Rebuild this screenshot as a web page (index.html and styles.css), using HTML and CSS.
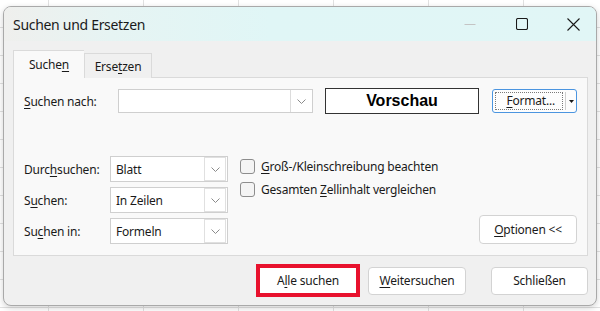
FILE: index.html
```html
<!DOCTYPE html>
<html lang="de">
<head>
    <meta charset="UTF-8">
    <meta name="viewport" content="width=device-width, initial-scale=1.0">
    <title>Suchen und Ersetzen</title>
    <link rel="stylesheet" href="styles.css">
</head>
<body>
    <div class="window">
        <div class="titlebar">
            <span class="title">Suchen und Ersetzen</span>
            <div class="controls">
                <span class="ctl ctl-min"><svg width="12" height="12" viewBox="0 0 12 12"><path d="M0.5 6.5h11" stroke="#c4c4c4" stroke-width="1"/></svg></span>
                <span class="ctl ctl-max"><svg width="12" height="12" viewBox="0 0 12 12"><rect x="0.5" y="0.5" width="11" height="11" rx="1.5" fill="none" stroke="#1a1a1a" stroke-width="1.1"/></svg></span>
                <span class="ctl ctl-close"><svg width="13" height="13" viewBox="0 0 13 13"><path d="M0.5 0.5l12 12M12.5 0.5l-12 12" stroke="#1a1a1a" stroke-width="1.1"/></svg></span>
            </div>
        </div>

        <div class="content">
            <div class="tabs">
                <div class="tab active">Suche<u>n</u></div>
                <div class="tab">Erse<u>t</u>zen</div>
            </div>

            <div class="panel">
                <div class="find-row">
                    <label class="find-label"><u>S</u>uchen nach:</label>
                    <div class="combo combo-find">
                        <span class="combo-text"></span>
                        <span class="combo-btn"><svg width="9" height="5" viewBox="0 0 9 5"><path d="M0.5 0.5l4 4 4-4" fill="none" stroke="#8a8a8a"/></svg></span>
                    </div>
                    <div class="preview">Vorschau</div>
                    <div class="format-btn">
                        <span class="format-main"><span class="focus-rect"><u>F</u>ormat...</span></span>
                        <span class="format-arrow"><svg width="5" height="3" viewBox="0 0 5 3"><path d="M0 0h5L2.5 3z" fill="#1a1a1a"/></svg></span>
                    </div>
                </div>

                <div class="options">
                    <div class="fields">
                        <label>Durc<u>h</u>suchen:</label>
                        <div class="combo"><span class="combo-text">Blatt</span><span class="combo-btn"><svg width="9" height="5" viewBox="0 0 9 5"><path d="M0.5 0.5l4 4 4-4" fill="none" stroke="#8a8a8a"/></svg></span></div>
                        <label>S<u>u</u>chen:</label>
                        <div class="combo"><span class="combo-text">In Zeilen</span><span class="combo-btn"><svg width="9" height="5" viewBox="0 0 9 5"><path d="M0.5 0.5l4 4 4-4" fill="none" stroke="#8a8a8a"/></svg></span></div>
                        <label>Su<u>c</u>hen in:</label>
                        <div class="combo"><span class="combo-text">Formeln</span><span class="combo-btn"><svg width="9" height="5" viewBox="0 0 9 5"><path d="M0.5 0.5l4 4 4-4" fill="none" stroke="#8a8a8a"/></svg></span></div>
                    </div>
                    <div class="checks">
                        <div class="check"><span class="box"></span><span><u>G</u>roß-/Kleinschreibung beachten</span></div>
                        <div class="check"><span class="box"></span><span>Gesamten <u>Z</u>ellinhalt vergleichen</span></div>
                    </div>
                    <button class="btn btn-options"><u>O</u>ptionen &lt;&lt;</button>
                </div>
            </div>

            <div class="actions">
                <div class="highlight"><button class="btn btn-all">A<u>l</u>le suchen</button></div>
                <button class="btn btn-next"><u>W</u>eitersuchen</button>
                <button class="btn btn-close">Schließen</button>
            </div>
        </div>
    </div>
</body>
</html>
```

FILE: styles.css
```css
body {
    margin: 0;
    padding: 0;
    width: 600px;
    height: 311px;
    overflow: hidden;
    font-family: "Noto Sans", "Open Sans", sans-serif;
    font-size: 12px;
    letter-spacing: -0.2px;
    color: #1a1a1a;
    background-color: #fff;
    background-image:
        repeating-linear-gradient(90deg, transparent 0 48px, #e1e1e1 48px 49px, transparent 49px 95px),
        repeating-linear-gradient(180deg, transparent 0 27px, #e1e1e1 27px 28px, transparent 28px 20px);
}
.window {
    box-sizing: border-box;
    width: 594px;
    height: 300px;
    margin: 6px 0 0 3px;
    border: 1px solid #a9a9a9;
    border-radius: 8px;
    background-color: #f0f0f0;
    box-shadow: 0 2px 6px rgba(0, 0, 0, 0.18);
    overflow: hidden;
}
.titlebar {
    height: 34px;
    display: flex;
    align-items: center;
    justify-content: space-between;
    padding-left: 9px;
    background: linear-gradient(90deg, #efefed 0%, #e6f4f3 18%, #e0f6f6 45%, #e1f6f6 100%);
}
.title {
    font-size: 14px;
    letter-spacing: -0.3px;
}
.controls {
    display: flex;
    align-items: center;
    height: 100%;
}
.ctl {
    width: 56px;
    display: flex;
    justify-content: center;
    align-items: center;
}
.ctl-min { width: 48px; }
.ctl-close { width: 46px; }

.content {
    padding: 9px 8px 0 9px;
}
.tabs {
    display: flex;
    align-items: flex-end;
    height: 27px;
}
.tab {
    box-sizing: border-box;
    width: 68px;
    height: 25px;
    padding-top: 4px;
    text-align: center;
    border: 1px solid #dadada;
    border-bottom: none;
    background-color: #f0f0f0;
    position: relative;
    top: 1px;
}
.tab.active {
    height: 28px;
    width: 71px;
    padding-top: 5px;
    background-color: #f9f9f9;
    border-right: none;
    z-index: 1;
}
.panel {
    box-sizing: border-box;
    height: 179px;
    border: 1px solid #dadada;
    background-color: #f9f9f9;
    padding: 10px 10px 0 10px;
}
u {
    text-underline-offset: 2px;
    text-decoration-thickness: 1px;
}

.find-row {
    display: flex;
    align-items: center;
    height: 26px;
}
.find-label {
    width: 94px;
}
.combo {
    box-sizing: border-box;
    height: 26px;
    display: flex;
    align-items: center;
    justify-content: space-between;
    border: 1px solid #cfcfcf;
    background-color: #fff;
}
.combo-find {
    width: 195px;
    height: 24px;
}
.combo-text {
    padding-left: 5px;
}
.combo-btn {
    box-sizing: border-box;
    width: 22px;
    height: 100%;
    display: flex;
    align-items: center;
    justify-content: center;
    border-left: 1px solid #dcdcdc;
    background-color: #fff;
}
.preview {
    box-sizing: border-box;
    width: 154px;
    height: 26px;
    margin-left: 12px;
    border: 1px solid #333;
    background-color: #fff;
    font-family: "Liberation Sans", Arial, sans-serif;
    font-weight: bold;
    font-size: 16px;
    letter-spacing: 0;
    text-align: center;
    line-height: 24px;
    color: #000;
}
.format-btn {
    box-sizing: border-box;
    width: 85px;
    height: 24px;
    margin-left: 13px;
    display: flex;
    border: 1px solid #4b95e0;
    border-radius: 3px;
    background-color: #fdfdfd;
    padding: 2px 0 2px 2px;
}
.format-main {
    flex: 1;
    display: flex;
    border-right: 1px solid #cfcfcf;
    padding-right: 2px;
}
.focus-rect {
    flex: 1;
    border: 1px dotted #7a7a7a;
    text-align: right;
    padding-right: 7px;
    line-height: 16px;
}
.format-arrow {
    width: 10px;
    display: flex;
    align-items: center;
    justify-content: center;
}

.options {
    display: flex;
    margin-top: 42px;
}
.fields {
    display: grid;
    grid-template-columns: 86px 118px;
    grid-auto-rows: 26px;
    row-gap: 5px;
    align-items: center;
}
.fields .combo-btn {
    height: 24px;
    margin-right: 1px;
    border: 1px solid #e0e0e0;
}
.checks {
    margin-left: 12px;
    padding-top: 3px;
}
.check {
    display: flex;
    align-items: center;
    height: 15px;
    margin-bottom: 8px;
}
.box {
    box-sizing: border-box;
    width: 15px;
    height: 15px;
    border: 1px solid #8d8d8d;
    border-radius: 3px;
    background-color: #f4f4f4;
    margin-right: 6px;
}
.btn {
    box-sizing: border-box;
    font-family: inherit;
    font-size: 12px;
    letter-spacing: -0.2px;
    color: #1a1a1a;
    background-color: #fff;
    border: 1px solid #d3d3d3;
    border-radius: 4px;
    padding: 0;
}
.btn-options {
    width: 98px;
    height: 29px;
    margin-left: auto;
    margin-top: 59px;
}

.actions {
    display: flex;
    justify-content: flex-end;
    align-items: center;
    margin-top: 8px;
}
.highlight {
    box-sizing: border-box;
    width: 104px;
    height: 33px;
    border: 4px solid #e8112d;
    background-color: #fff;
}
.btn-all {
    width: 100%;
    height: 100%;
    border: none;
    border-radius: 0;
}
.btn-next {
    width: 98px;
    height: 28px;
    margin-left: 8px;
}
.btn-close {
    width: 97px;
    height: 28px;
    margin-left: 25px;
}
```
